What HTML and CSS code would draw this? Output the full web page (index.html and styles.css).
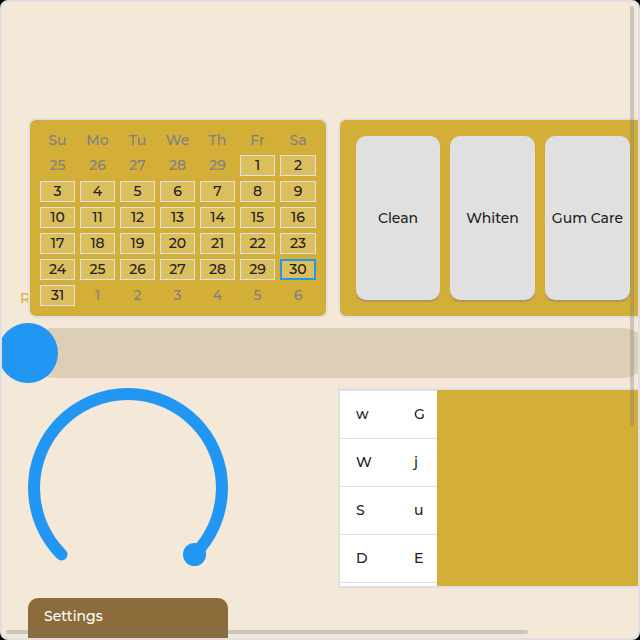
FILE: index.html
```html
<!DOCTYPE html>
<html lang="en">
<head>
<meta charset="utf-8">
<title>Settings</title>
<link rel="stylesheet" href="styles.css">
</head>
<body>
<main class="screen">
  <span class="hidden-label">R</span>
  <div class="grid">
    <table class="card calendar">
      <thead>
        <tr><th>Su</th><th>Mo</th><th>Tu</th><th>We</th><th>Th</th><th>Fr</th><th>Sa</th></tr>
      </thead>
      <tbody>
        <tr><td>25</td><td>26</td><td>27</td><td>28</td><td>29</td><td><button class="day">1</button></td><td><button class="day">2</button></td></tr>
        <tr><td><button class="day">3</button></td><td><button class="day">4</button></td><td><button class="day">5</button></td><td><button class="day">6</button></td><td><button class="day">7</button></td><td><button class="day">8</button></td><td><button class="day">9</button></td></tr>
        <tr><td><button class="day">10</button></td><td><button class="day">11</button></td><td><button class="day">12</button></td><td><button class="day">13</button></td><td><button class="day">14</button></td><td><button class="day">15</button></td><td><button class="day">16</button></td></tr>
        <tr><td><button class="day">17</button></td><td><button class="day">18</button></td><td><button class="day">19</button></td><td><button class="day">20</button></td><td><button class="day">21</button></td><td><button class="day">22</button></td><td><button class="day">23</button></td></tr>
        <tr><td><button class="day">24</button></td><td><button class="day">25</button></td><td><button class="day">26</button></td><td><button class="day">27</button></td><td><button class="day">28</button></td><td><button class="day">29</button></td><td><button class="day today">30</button></td></tr>
        <tr><td><button class="day">31</button></td><td>1</td><td>2</td><td>3</td><td>4</td><td>5</td><td>6</td></tr>
      </tbody>
    </table>

    <div class="card modes">
      <button class="mode">Clean</button>
      <button class="mode">Whiten</button>
      <button class="mode">Gum Care</button>
    </div>

    <div class="slider">
      <input class="range" type="range" min="0" max="100" value="0" aria-label="Level">
    </div>

    <svg class="arc" viewBox="0 0 200 200" aria-hidden="true">
      <path class="arc-line" d="M33.53 166.47A94 94 0 1 1 166.47 166.47"/>
      <circle class="arc-knob" cx="166.5" cy="166.5" r="11.5"/>
    </svg>

    <div class="list">
      <table class="pairs">
        <tbody>
          <tr><td>w</td><td>G</td></tr>
          <tr><td>W</td><td>j</td></tr>
          <tr><td>S</td><td>u</td></tr>
          <tr><td>D</td><td>E</td></tr>
          <tr><td></td><td></td></tr>
        </tbody>
      </table>
    </div>

    <section class="settings">
      <h2 class="settings-title">Settings</h2>
    </section>
  </div>
  <div class="bar bar-vertical"></div>
  <div class="bar bar-horizontal"></div>
</main>
</body>
</html>
```
FILE: styles.css
```css
* {
  box-sizing: border-box;
}

body {
  margin: 0;
  background: #000;
  color: #212121;
  font: 500 14px/20px Montserrat, Inter, sans-serif;
}

button {
  margin: 0;
  padding: 0;
  color: inherit;
  font: inherit;
}

.screen {
  position: relative;
  height: 100vh;
  padding: 116px 0 0 26px;
  overflow: hidden;
  border: 2px solid #e0e0e0;
  border-radius: 8px;
  background: #f4e8d8;
}

.hidden-label {
  position: absolute;
  top: 286px;
  left: 18px;
  color: #d4af37;
}

.grid {
  position: relative;
  display: grid;
  grid-template-columns: 300px minmax(310px, 1fr);
  grid-template-rows: 200px 50px 200px auto;
  gap: 10px;
}

.card {
  border: 2px solid #e0e0e0;
  border-radius: 8px;
  background: #d4af37;
}

.calendar {
  display: grid;
  padding: 10px;
}

.calendar thead,
.calendar tbody {
  display: grid;
  gap: 5px;
}

.calendar thead {
  margin-bottom: 5px;
}

.calendar tr {
  display: grid;
  grid-template-columns: repeat(6, 35px) 1fr;
  gap: 5px;
}

.calendar th,
.calendar td {
  padding: 0;
  color: #808080;
  font-weight: 500;
  text-align: center;
}

.calendar td {
  height: 21px;
  line-height: 21px;
}

.day {
  display: block;
  width: 100%;
  height: 21px;
  border: 1px solid #e0e0e0;
  background: #dbbf5e;
  color: #212121;
  line-height: 19px;
}

.today {
  border: 2px solid #2196f3;
  line-height: 17px;
}

.modes {
  display: grid;
  grid-template-columns: 84px 1fr 1fr;
  gap: 10px;
  padding: 16px;
}

.mode {
  border: 0;
  border-radius: 10px;
  background: #e0e0e0;
  box-shadow: 0 2px 1px rgba(128, 128, 128, 0.5);
}

.slider {
  grid-column: 1 / -1;
  display: flex;
  align-items: center;
  border-radius: 25px;
  background: #ddceb8;
}

.range {
  flex: 1;
  height: 60px;
  margin: -5px -30px;
  appearance: none;
  background: none;
}

.range::-webkit-slider-thumb {
  width: 60px;
  height: 60px;
  appearance: none;
  border-radius: 50%;
  background: #2196f3;
}

.arc {
  width: 200px;
  height: 200px;
}

.arc-line {
  fill: none;
  stroke: #2196f3;
  stroke-width: 12;
  stroke-linecap: round;
}

.arc-knob {
  fill: #2196f3;
}

.list {
  overflow: hidden;
  border: 2px solid #e0e0e0;
  background: #d4af37;
}

.pairs {
  border-collapse: separate;
  border-spacing: 0;
  background: #fff;
}

.pairs td {
  width: 58px;
  height: 48px;
  padding: 0 0 2px 16px;
  border-top: 1px solid #e0e0e0;
}

.pairs td + td {
  width: 39px;
}

.settings {
  width: 200px;
  height: 100px;
  border-radius: 10px;
  background: #8b6c3a;
}

.settings-title {
  margin: 0;
  padding: 8px 16px;
  color: #fff;
  font-size: 14px;
  font-weight: 500;
}

.bar {
  position: absolute;
  border-radius: 2px;
  background: rgba(117, 117, 117, 0.3);
}

.bar-vertical {
  top: 4px;
  right: 4px;
  width: 4px;
  height: 66%;
}

.bar-horizontal {
  bottom: 4px;
  left: 4px;
  width: 82%;
  height: 4px;
}
```
